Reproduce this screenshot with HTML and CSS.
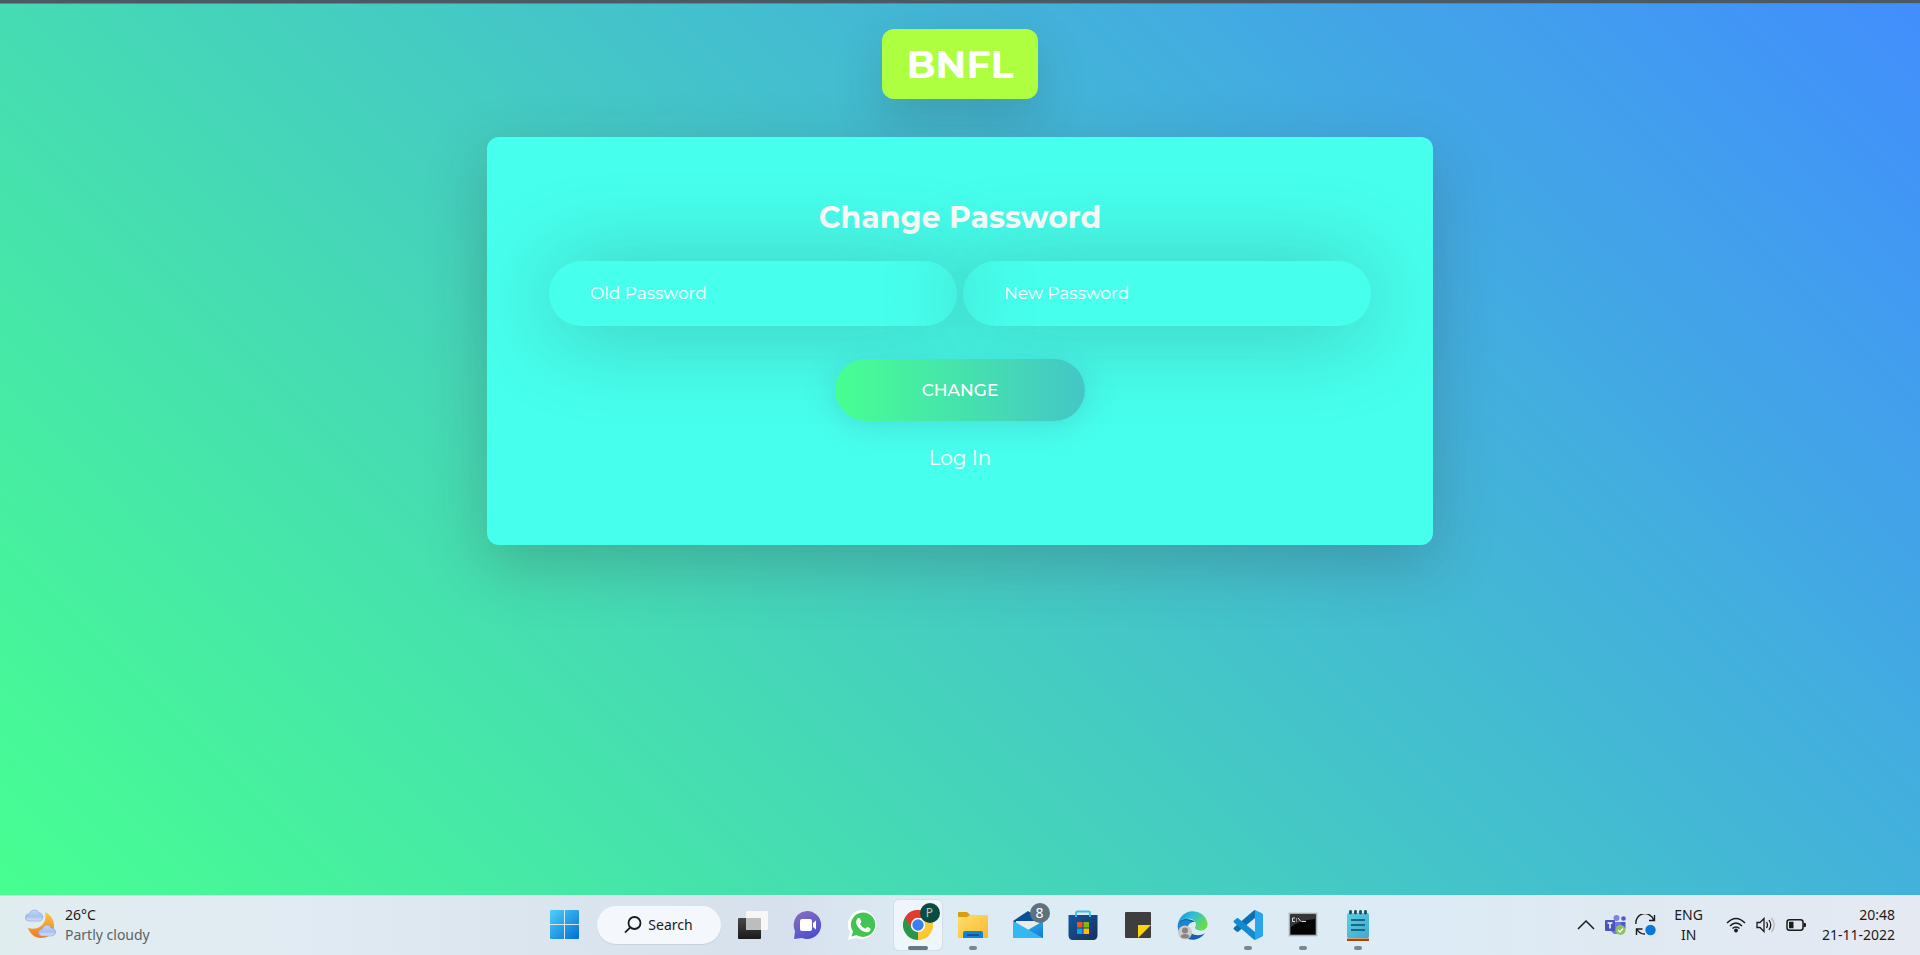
FILE: index.html
```html
<!DOCTYPE html>
<html lang="en">
<head>
<meta charset="utf-8">
<title>Change Password</title>
<link rel="stylesheet" href="styles.css">
</head>
<body>
<div class="page">
  <div class="chrome-edge"></div>
  <main class="content">
    <h1 class="logo">BNFL</h1>
    <form class="card">
      <h2 class="title">Change Password</h2>
      <div class="fields">
        <input class="field" type="password" placeholder="Old Password" aria-label="Old Password">
        <input class="field" type="password" placeholder="New Password" aria-label="New Password">
      </div>
      <button class="submit" type="button">CHANGE</button>
      <a class="login" href="#">Log In</a>
    </form>
  </main>
</div>
<footer class="taskbar">
  <button class="weather" type="button">
    <svg width="32" height="32" viewBox="0 0 32 32">
      <defs>
        <linearGradient id="moon" x1="0" y1="0" x2="0" y2="1"><stop offset="0" stop-color="#fbc54a"/><stop offset="1" stop-color="#ee7d1c"/></linearGradient>
        <linearGradient id="cloud" x1="0" y1="0" x2="0" y2="1"><stop offset="0" stop-color="#c3d8fb"/><stop offset=".6" stop-color="#a9c0f0"/><stop offset="1" stop-color="#d6e3fa"/></linearGradient>
      </defs>
      <path d="M20 3C34 10 31 29 16 29C10 29 5 25 3 19C13 22 23 15 20 3Z" fill="url(#moon)"/>
      <path d="M4 12a3.500 3.500 0 0 1 0-7C6 0 13 0 14 4c5 0 5 8 0 8Z" fill="url(#cloud)" stroke="#7f9bd8" stroke-width=".6"/>
      <path d="M17 27a3.500 3.500 0 0 1 0-7c2-5 8-5 9-1 6 0 6 8 0 8Z" fill="url(#cloud)" stroke="#7f9bd8" stroke-width=".6"/>
    </svg>
    <span class="lines"><span>26°C</span><span class="muted">Partly cloudy</span></span>
  </button>
  <nav class="apps">
    <button class="app" type="button" aria-label="Start">
      <svg width="30" height="30" viewBox="0 0 30 30"><defs><linearGradient id="win" x1="0" y1="0" x2="1" y2="1"><stop offset="0" stop-color="#50d0fb"/><stop offset="1" stop-color="#006fd0"/></linearGradient></defs><path fill="url(#win)" d="M1 0H14V14H0V1Q0 0 1 0ZM15 0H28Q29 0 29 1V14H15ZM0 15H14V29H1Q0 29 0 28ZM15 15H29V28Q29 29 28 29H15Z"/></svg>
    </button>
    <button class="search" type="button">
      <svg width="18" height="18" viewBox="0 0 18 18" fill="none" stroke="#1b1b1b" stroke-width="1.8"><circle cx="10.5" cy="7" r="6"/><path d="M6.3 11.3 1 16.7"/></svg>
      <span>Search</span>
    </button>
    <button class="app" type="button" aria-label="Task view">
      <svg width="30" height="30" viewBox="0 0 30 30"><defs><linearGradient id="tv" x1="0" y1="0" x2="0" y2="1"><stop offset="0" stop-color="#484848"/><stop offset="1" stop-color="#1a1a1a"/></linearGradient></defs><rect y="8" width="23" height="21" rx="1" fill="url(#tv)"/><rect x="8" y="1" width="22" height="19" rx="1" fill="#f7f7f7"/><path d="M8 8H23V20H8Z" fill="#bdbdbd"/></svg>
    </button>
    <button class="app" type="button" aria-label="Chat">
      <svg width="30" height="30" viewBox="0 0 30 30"><defs><linearGradient id="chat" x1="0" y1="0" x2=".6" y2="1"><stop offset="0" stop-color="#8b70bd"/><stop offset="1" stop-color="#4e50cf"/></linearGradient></defs><path d="M15 1A14 14 0 1 1 9 28L1 29 2 21A14 14 0 0 1 15 1Z" fill="url(#chat)"/><rect x="7" y="9" width="12" height="12" rx="2" fill="#fff"/><path d="M20 13 23 10.500V19.500L20 17Z" fill="#fff"/></svg>
    </button>
    <button class="app" type="button" aria-label="WhatsApp">
      <svg width="30" height="30" viewBox="0 0 30 30"><path d="M15 0A14.600 14.600 0 1 1 8 28L0 30 2 22A14.600 14.600 0 0 1 15 0Z" fill="#fff"/><path d="M15 2.500A12.200 12.200 0 1 1 8.500 25L3.500 26.500 5 21.500A12.200 12.200 0 0 1 15 2.500Z" fill="#42c452"/><path d="M9.500 8.500Q11 7 12 8.500L13.300 11.700Q13 13 12 14 14 17.500 17.300 18.800L19.200 17Q21 17.300 22.700 18.700 22.500 22 19 22.200 14 22 10.200 17.200 6.500 12.500 9.500 8.500Z" fill="#fff"/></svg>
    </button>
    <button class="app active" type="button" aria-label="Chrome">
      <svg width="30" height="30" viewBox="0 0 30 30"><path d="M15 15 2 7.500A15 15 0 0 1 28 7.500Z" fill="#e33b2e"/><path d="M15 15 28 7.500A15 15 0 0 1 15 30Z" fill="#fcc934"/><path d="M15 15V30A15 15 0 0 1 2 7.500Z" fill="#279847"/><path d="M15 8H28.200A15 15 0 0 1 15 30L21 18.500Z" fill="#fcc934"/><path d="M2 7.500 9 18.500 15 8H28A15 15 0 0 0 2 7.500Z" fill="#e33b2e"/><circle cx="15" cy="15" r="7.200" fill="#fff"/><circle cx="15" cy="15" r="5.700" fill="#3c7ff0"/></svg>
      <span class="badge profile">P</span>
      <span class="run wide"></span>
    </button>
    <button class="app" type="button" aria-label="File Explorer">
      <svg width="30" height="30" viewBox="0 0 30 30"><defs><linearGradient id="fold" x1="0" y1="0" x2="1" y2="1"><stop offset="0" stop-color="#ffdf70"/><stop offset="1" stop-color="#f8b92b"/></linearGradient></defs><path d="M0 3Q0 2 1 2H9L12 5V9H0Z" fill="#dc9c10"/><path d="M0 7H9L12 5H29Q30 5 30 6V28H0Z" fill="url(#fold)"/><path d="M5 28V23Q5 21 7 21H23Q25 21 25 23V28Z" fill="#1482d4"/><path d="M9 25H21" stroke="#0a4a88" stroke-width="1.500"/></svg>
      <span class="run"></span>
    </button>
    <button class="app" type="button" aria-label="Mail">
      <svg width="30" height="30" viewBox="0 0 30 30"><defs><linearGradient id="mail" x1="0" y1="0" x2="1" y2="1"><stop offset="0" stop-color="#36bdf0"/><stop offset="1" stop-color="#1179d3"/></linearGradient></defs><path d="M0 11 15 1 30 11V16H0Z" fill="#0a4f9e"/><path d="M3 11H27V20H3Z" fill="#e9ebed"/><path d="M0 11 15 20 30 11V28H0Z" fill="url(#mail)"/><path d="M0 11 30 28H0Z" fill="#33b8ef"/></svg>
      <span class="badge">8</span>
    </button>
    <button class="app" type="button" aria-label="Microsoft Store">
      <svg width="30" height="30" viewBox="0 0 30 30"><defs><linearGradient id="store" x1="0" y1="0" x2="1" y2="1"><stop offset="0" stop-color="#12589f"/><stop offset="1" stop-color="#1b2f5c"/></linearGradient></defs><path d="M0.500 5H29.500V25Q29.500 30 25 30H5Q.5 30 .5 25Z" fill="url(#store)"/><path d="M8 7V3Q8 1.500 9.500 1.500H20.500Q22 1.500 22 3V7" fill="none" stroke="#3cbdea" stroke-width="1.800"/><path d="M9 12H14.500V17.500H9Z" fill="#f05323"/><path d="M15.500 12H21V17.500H15.500Z" fill="#7fbb0d"/><path d="M9 18.500H14.500V24H9Z" fill="#08a5ef"/><path d="M15.500 18.500H21V24H15.500Z" fill="#ffba0a"/></svg>
    </button>
    <button class="app" type="button" aria-label="Sticky Notes">
      <svg width="30" height="30" viewBox="0 0 30 30"><path d="M3 2H27Q28 2 28 3V27Q28 28 27 28H3Q2 28 2 27V3Q2 2 3 2Z" fill="#3e3e3e"/><path d="M15 15H28L15 28Z" fill="#ffd40a"/></svg>
    </button>
    <button class="app" type="button" aria-label="Edge">
      <svg width="31" height="30" viewBox="0 0 31 30"><defs><linearGradient id="edge" x1="0" y1="0" x2="1" y2=".5"><stop offset="0" stop-color="#168fce"/><stop offset=".5" stop-color="#30c0d5"/><stop offset="1" stop-color="#69dc4d"/></linearGradient></defs><path d="M1 14A15 15 0 0 1 30.500 13C31 19 26 22 21 20 17 19 18 17 19 15 19 11 15 8 10 9 5 9 2 12 1 14Z" fill="url(#edge)"/><path d="M1 14C3 9 12 7 18 12 10 11 9 19 14 23 18 26 24 26 28 23 24 29 17 31 11 29 3 27 0 21 1 14Z" fill="#1560b0"/><path d="M1 14C4 10 10 9 15 12 9 14 8 20 12 29 4 27 0 21 1 14Z" fill="#1788d7"/><circle cx="8" cy="22.500" r="7" fill="#cfcbc8"/><circle cx="8" cy="20.500" r="3" fill="#8b8580"/><path d="M3.500 27Q4 24 8 24 12 24 12.500 27 8 30 3.500 27Z" fill="#8b8580"/></svg>
    </button>
    <button class="app" type="button" aria-label="Visual Studio Code">
      <svg width="30" height="30" viewBox="0 0 30 30"><path d="M22 8 5.500 21.500Q4.500 22.300 3.500 21.500L1 19.500Q0 18.500 1 17.500L20.500.700Q21.500 0 22 0Z" fill="#0b70b7"/><path d="M22 22 5.500 8.500Q4.500 7.700 3.500 8.500L1 10.500Q0 11.500 1 12.500L20.500 29.300Q21.500 30 22 30Z" fill="#128bd2"/><path d="M22 0 29 3.300Q30 4 30 5V25Q30 26 29 26.700L22 30Z" fill="#2ba4ee"/></svg>
      <span class="run"></span>
    </button>
    <button class="app" type="button" aria-label="Command Prompt">
      <svg width="30" height="30" viewBox="0 0 30 30"><rect x="1.500" y="3.500" width="27" height="22" fill="#050505" stroke="#aab0b4" stroke-width="1.600"/><path d="M3 5H27V9Q12 10 3 17Z" fill="#343638"/><path d="M7 8H4.500V11.500H7M8.500 8.500V9.500M8.500 10.500V11.500M10 8 13 11.500M13.500 11.500H18" stroke="#ddd" fill="none" stroke-width="1"/></svg>
      <span class="run"></span>
    </button>
    <button class="app" type="button" aria-label="Notepad">
      <svg width="30" height="31" viewBox="0 0 30 31"><defs><linearGradient id="note" x1="0" y1="0" x2="1" y2="1"><stop offset="0" stop-color="#5bd0e3"/><stop offset="1" stop-color="#42a8cb"/></linearGradient></defs><path d="M4 27H26V31H4Z" fill="#a6470d"/><path d="M4 27H26V28.500H4Z" fill="#fff"/><rect x="4" y="3" width="22" height="25" rx="1.500" fill="url(#note)"/><path d="M8 10H22M8 15H22M8 20H22" stroke="#146a88" stroke-width="1.800"/><path d="M7.500 1.500V3M12.500 1.500V3M17.500 1.500V3M22.500 1.500V3" stroke="#164d60" stroke-width="2.800" stroke-linecap="round"/></svg>
      <span class="run"></span>
    </button>
  </nav>
  <div class="tray">
    <button class="tray-icon" type="button" aria-label="Show hidden icons"><svg width="18" height="20" viewBox="0 0 18 20"><path d="M1 14 9 6 17 14" fill="none" stroke="#1b1b1b" stroke-width="1.500"/></svg></button>
    <button class="tray-icon" type="button" aria-label="Teams"><svg width="22" height="20" viewBox="0 0 22 20"><circle cx="11.500" cy="3" r="3" fill="#7b83eb"/><circle cx="18.500" cy="3.500" r="2.300" fill="#5059c9"/><path d="M14 7H20.500V13Q20 17 16 17Z" fill="#5059c9"/><path d="M6 7H16V14Q15 19 11 19 6 19 6 13Z" fill="#7077d8"/><rect y="5" width="10" height="11" rx="1" fill="#4b53bc"/><path d="M2.500 8H7.500M5 8V13.500" stroke="#fff" stroke-width="1.500"/><circle cx="15.500" cy="15" r="5" fill="#8fc45c"/><path d="M13 15 15 17 18 13.500" fill="none" stroke="#fff" stroke-width="1.300"/></svg></button>
    <button class="tray-icon" type="button" aria-label="Sync"><svg width="22" height="22" viewBox="0 0 22 22"><path d="M1 10A9 9 0 0 1 18.500 6M19.500 1V6.500H14M10 20A9 9 0 0 1 2 15.500M7.500 15H1.500V21" fill="none" stroke="#1b1b1b" stroke-width="1.400"/><circle cx="15.500" cy="16" r="5.200" fill="#0a78d8"/></svg></button>
    <button class="lang lines" type="button"><span>ENG</span><span>IN</span></button>
    <button class="system" type="button" aria-label="Network, volume and battery">
      <svg width="20" height="16" viewBox="0 0 20 16" fill="none" stroke="#1b1b1b" stroke-width="1.500"><path d="M1 6Q10-3 19 6M4 9Q10 3 16 9M6.500 11.500Q10 8.500 13.500 11.500"/><circle cx="10" cy="13.500" r="1.200" fill="#1b1b1b"/></svg>
      <svg width="20" height="16" viewBox="0 0 20 16" fill="none" stroke="#1b1b1b" stroke-width="1.300"><path d="M1 5.500H4L8 1.500V14.500L4 10.500H1ZM10.500 5Q12.500 8 10.500 11M13 3Q16.500 8 13 13"/><path d="M15.500 1Q21 8 15.500 15" stroke="#b5b8be"/></svg>
      <svg width="20" height="16" viewBox="0 0 20 16"><rect x="1" y="2.700" width="16" height="10.600" rx="2.500" fill="none" stroke="#1b1b1b" stroke-width="1.500"/><path d="M3 4.700H7.500V11.300H3ZM17.500 5.500 20 6.500V9.500L17.500 10.500Z" fill="#1b1b1b"/></svg>
    </button>
    <button class="clock lines" type="button"><span>20:48</span><span>21-11-2022</span></button>
  </div>
</footer>
</body>
</html>
```
FILE: styles.css
```css
* { box-sizing: border-box; }

body {
  margin: 0;
  min-height: 100vh;
  display: flex;
  flex-direction: column;
  color: #fff;
  font-family: Montserrat, Inter, "Open Sans", sans-serif;
}

button { margin: 0; border: 0; padding: 0; background: none; color: inherit; font: inherit; }
svg { display: block; flex: none; }

.page {
  flex: 1;
  display: flex;
  flex-direction: column;
  background: linear-gradient(45deg, #47ff91, #418efd);
}

.chrome-edge { height: 4px; background: #4a5963; border-bottom: 1px solid #6b8590; }

.content {
  display: flex;
  flex-direction: column;
  align-items: center;
  padding: 25px 24px 40px;
  gap: 38px;
}

.logo {
  margin: 0;
  padding: 13px 24px 11px;
  border-radius: 12px;
  background: #adff3f;
  box-shadow: 0 20px 50px rgba(50, 50, 50, 0.2);
  font-size: 38px;
  line-height: 46px;
  font-weight: 700;
}

.card {
  width: 100%;
  max-width: 946px;
  padding: 63px 62px 75px;
  border-radius: 12px;
  background: #47ffed;
  box-shadow: 0 20px 60px rgba(50, 50, 50, 0.25);
  display: flex;
  flex-direction: column;
  align-items: center;
}

.title { margin: 0 0 25px; font-size: 30px; line-height: 36px; font-weight: 700; }

.fields { width: 100%; display: flex; gap: 6px; margin-bottom: 33px; }

.field {
  flex: 1;
  min-width: 0;
  height: 65px;
  padding: 0 41px 2px;
  border: 0;
  border-radius: 33px;
  outline: 0;
  background: transparent;
  box-shadow: 0 5px 90px rgba(50, 50, 50, 0.3);
  color: #fff;
  font-family: inherit;
  font-size: 17px;
}

.field::placeholder { color: #fff; opacity: 1; }

.submit {
  width: 250px;
  height: 62px;
  border-radius: 31px;
  background: linear-gradient(90deg, #47ff91, #44c6c7);
  box-shadow: 0 5px 30px rgba(68, 150, 170, 0.3);
  font-size: 17px;
  font-weight: 500;
}

.login { margin-top: 25px; color: #fff; font-size: 20px; line-height: 24px; text-decoration: none; }

.taskbar {
  height: 60px;
  padding-bottom: 1px;
  display: grid;
  grid-template-columns: 1fr auto 1fr;
  align-items: center;
  background: linear-gradient(90deg, #e0edef 0%, #e1ebf3 15%, #dce6ef 26%, #d7e1ed 41%, #dcebf4 48%, #dcebf5 75%, #e0e9f2 85%, #e5e9f2 100%);
  border-top: 1px solid #d7e9eb;
  color: #1b1b1b;
  font: 14px/20px "Noto Sans", "Open Sans", sans-serif;
}

.lines { display: flex; flex-direction: column; }
.muted { color: #5b6467; }
.weather { display: flex; align-items: center; gap: 8px; padding-left: 25px; text-align: left; }

.apps { display: flex; align-items: center; gap: 7px; padding-left: 2px; }

.app {
  position: relative;
  width: 48px;
  height: 50px;
  display: grid;
  place-items: center;
  border-radius: 5px;
}

.app.active { background: #eff6fb; box-shadow: 0 0 1px 1px #d3dee6; }

.search {
  width: 124px;
  height: 38px;
  margin: 0 1px;
  display: flex;
  align-items: center;
  justify-content: center;
  gap: 6px;
  border-radius: 19px;
  background: #f4f7fb;
  box-shadow: 0 1px 1px #c8d1da;
}

.badge {
  position: absolute;
  top: 3px;
  right: 2px;
  width: 20px;
  height: 20px;
  border-radius: 50%;
  background: #5f717d;
  color: #fff;
  font-size: 14px;
  text-align: center;
}

.badge.profile { background: #0a4c43; color: #b5c9c5; font-size: 12px; }

.run {
  position: absolute;
  bottom: 0;
  left: 50%;
  width: 8px;
  height: 4px;
  border-radius: 2px;
  background: #7b868e;
  transform: translateX(-50%);
}

.run.wide { width: 20px; background: #647785; }

.tray { display: flex; align-items: center; justify-content: flex-end; padding-right: 25px; }
.tray-icon { width: 30px; display: grid; place-items: center; }
.lang { margin: 0 23px 0 13px; text-align: center; }
.system { display: flex; align-items: center; gap: 10px; margin-right: 16px; }
.clock { text-align: right; }
```
